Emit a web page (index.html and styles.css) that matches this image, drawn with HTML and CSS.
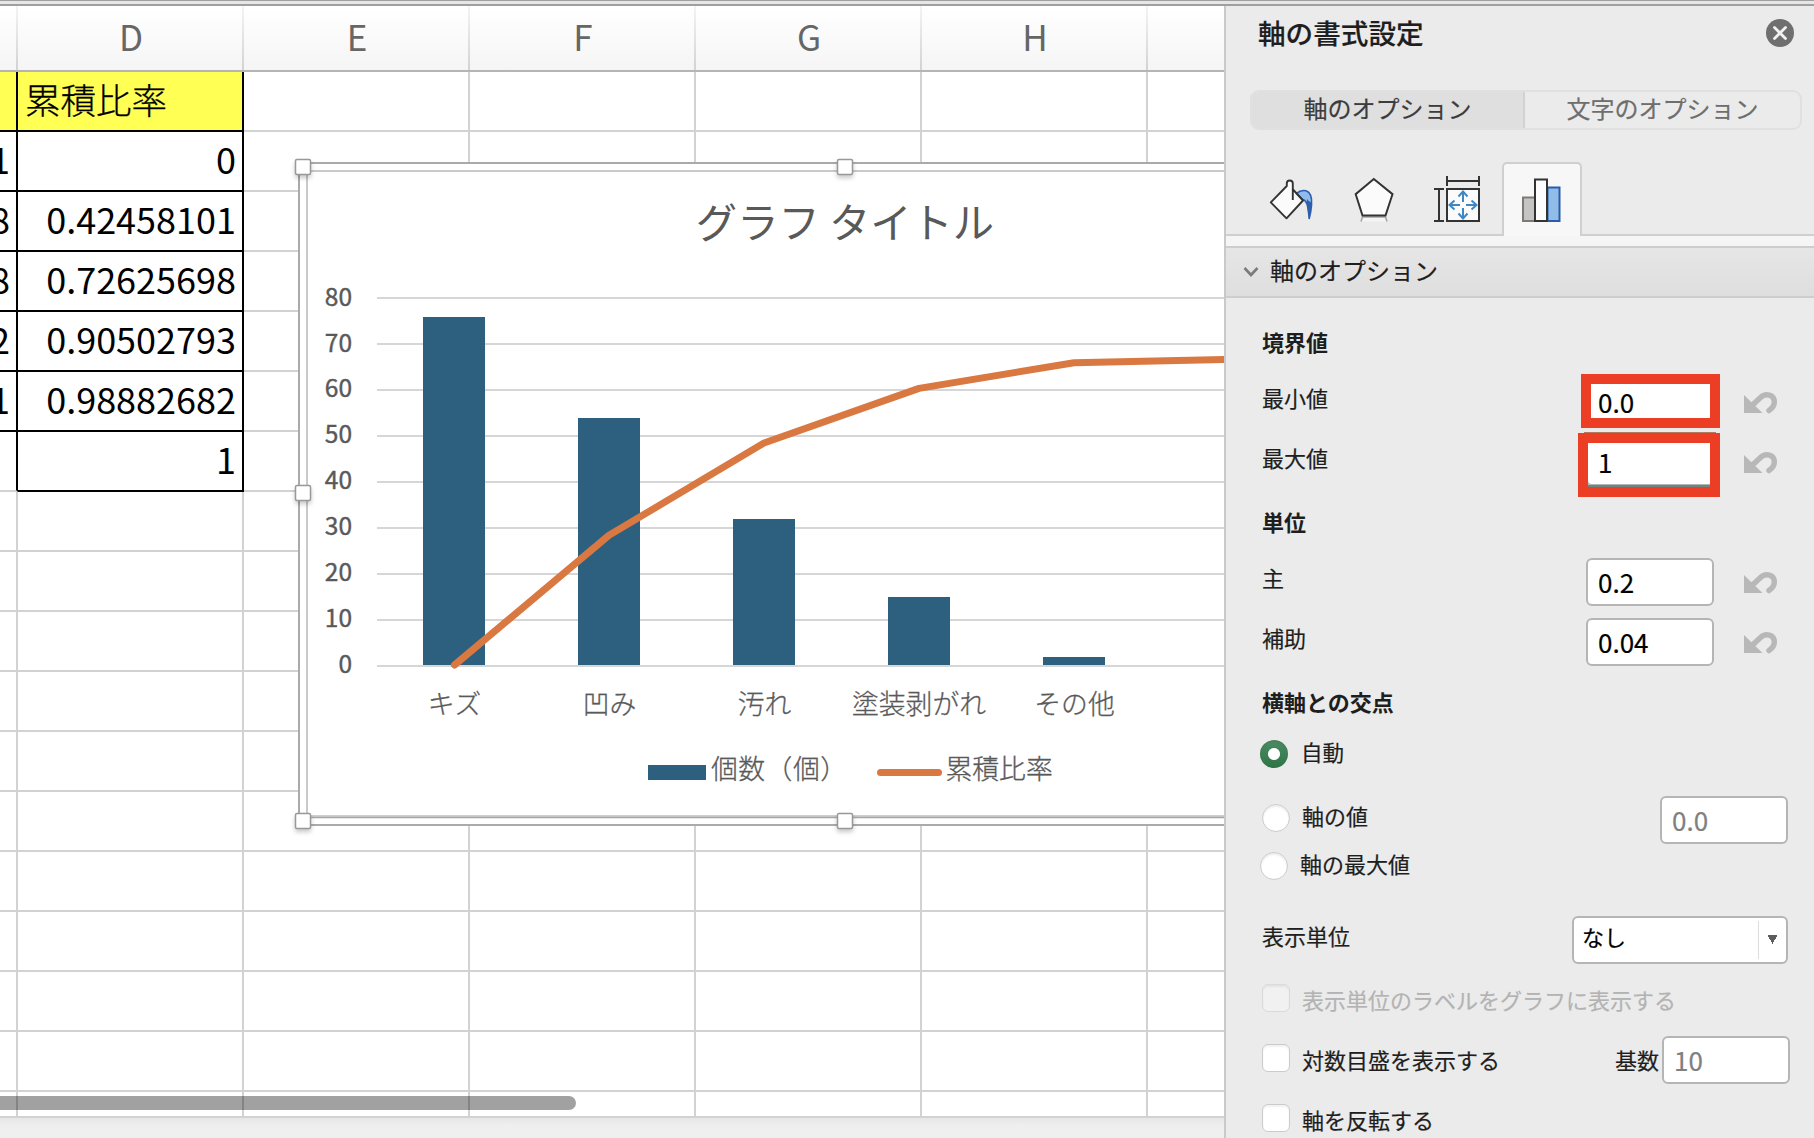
FILE: index.html
```html
<!DOCTYPE html>
<html lang="ja">
<head>
<meta charset="utf-8">
<title>軸の書式設定</title>
<link rel="stylesheet" href="styles.css">
</head>
<body>
<div class="topbar"></div>
<div class="workspace">
  <main class="sheet">
    <div class="cols">
      <div class="col-head"></div><div class="col-head">D</div><div class="col-head">E</div><div class="col-head">F</div><div class="col-head">G</div><div class="col-head">H</div><div class="col-head last"></div>
    </div>
    <div class="row"><div class="cell tbl yellow"></div><div class="cell tbl yellow text">累積比率</div><div class="cell"></div><div class="cell"></div><div class="cell"></div><div class="cell"></div><div class="cell last"></div></div>
    <div class="row"><div class="cell tbl">1</div><div class="cell tbl">0</div><div class="cell"></div><div class="cell"></div><div class="cell"></div><div class="cell"></div><div class="cell last"></div></div>
    <div class="row"><div class="cell tbl">8</div><div class="cell tbl">0.42458101</div><div class="cell"></div><div class="cell"></div><div class="cell"></div><div class="cell"></div><div class="cell last"></div></div>
    <div class="row"><div class="cell tbl">8</div><div class="cell tbl">0.72625698</div><div class="cell"></div><div class="cell"></div><div class="cell"></div><div class="cell"></div><div class="cell last"></div></div>
    <div class="row"><div class="cell tbl">2</div><div class="cell tbl">0.90502793</div><div class="cell"></div><div class="cell"></div><div class="cell"></div><div class="cell"></div><div class="cell last"></div></div>
    <div class="row"><div class="cell tbl">1</div><div class="cell tbl">0.98882682</div><div class="cell"></div><div class="cell"></div><div class="cell"></div><div class="cell"></div><div class="cell last"></div></div>
    <div class="row"><div class="cell edge"></div><div class="cell tbl">1</div><div class="cell"></div><div class="cell"></div><div class="cell"></div><div class="cell"></div><div class="cell last"></div></div>
    <div class="row"><div class="cell"></div><div class="cell"></div><div class="cell"></div><div class="cell"></div><div class="cell"></div><div class="cell"></div><div class="cell last"></div></div>
    <div class="row"><div class="cell"></div><div class="cell"></div><div class="cell"></div><div class="cell"></div><div class="cell"></div><div class="cell"></div><div class="cell last"></div></div>
    <div class="row"><div class="cell"></div><div class="cell"></div><div class="cell"></div><div class="cell"></div><div class="cell"></div><div class="cell"></div><div class="cell last"></div></div>
    <div class="row"><div class="cell"></div><div class="cell"></div><div class="cell"></div><div class="cell"></div><div class="cell"></div><div class="cell"></div><div class="cell last"></div></div>
    <div class="row"><div class="cell"></div><div class="cell"></div><div class="cell"></div><div class="cell"></div><div class="cell"></div><div class="cell"></div><div class="cell last"></div></div>
    <div class="row"><div class="cell"></div><div class="cell"></div><div class="cell"></div><div class="cell"></div><div class="cell"></div><div class="cell"></div><div class="cell last"></div></div>
    <div class="row"><div class="cell"></div><div class="cell"></div><div class="cell"></div><div class="cell"></div><div class="cell"></div><div class="cell"></div><div class="cell last"></div></div>
    <div class="row"><div class="cell"></div><div class="cell"></div><div class="cell"></div><div class="cell"></div><div class="cell"></div><div class="cell"></div><div class="cell last"></div></div>
    <div class="row"><div class="cell"></div><div class="cell"></div><div class="cell"></div><div class="cell"></div><div class="cell"></div><div class="cell"></div><div class="cell last"></div></div>
    <div class="row"><div class="cell"></div><div class="cell"></div><div class="cell"></div><div class="cell"></div><div class="cell"></div><div class="cell"></div><div class="cell last"></div></div>
    <div class="row partial"><div class="cell"></div><div class="cell"></div><div class="cell"></div><div class="cell"></div><div class="cell"></div><div class="cell"></div><div class="cell last"></div></div>
    <div class="scrollbar"></div>

    <svg class="chart" width="944" height="690" viewBox="280 150 944 690">
      <rect x="299" y="163" width="1100" height="662" fill="#fff" stroke="#aaa" stroke-width="2"/>
      <path d="M307 817V171H1224" fill="none" stroke="#c9c9c9" stroke-width="2"/>
      <path d="M307 816H1224" stroke="#cfcfcf" stroke-width="2"/>
      <path d="M307 817.5H1224" stroke="#a6a6a6" stroke-width="1.4"/>
      <text class="chart-title" x="845" y="238">グラフ タイトル</text>
      <path d="M377 298H1224M377 344H1224M377 390H1224M377 436H1224M377 482H1224M377 528H1224M377 574H1224M377 620H1224M377 666H1224" stroke="#d6d6d6" stroke-width="2"/>
      <g class="axis">
        <text x="352" y="306">80</text><text x="352" y="352">70</text><text x="352" y="397">60</text><text x="352" y="443">50</text><text x="352" y="489">40</text><text x="352" y="535">30</text><text x="352" y="581">20</text><text x="352" y="627">10</text><text x="352" y="673">0</text>
      </g>
      <g fill="#2d5f7f">
        <rect x="423" y="317" width="62" height="348"/><rect x="578" y="418" width="62" height="247"/><rect x="733" y="519" width="62" height="146"/><rect x="888" y="597" width="62" height="68"/><rect x="1043" y="657" width="62" height="8"/>
        <rect x="648" y="765" width="58" height="15"/>
      </g>
      <path d="M454.500 665L609 535.3L764 443L919 388.4L1074 362.7L1229 359.3" fill="none" stroke="#d97941" stroke-width="7" stroke-linecap="round" stroke-linejoin="round"/>
      <path d="M880.5 772.5H938.5" stroke="#d97941" stroke-width="7" stroke-linecap="round"/>
      <g class="category">
        <text x="454.500" y="714">キズ</text><text x="609.500" y="714">凹み</text><text x="764.500" y="714">汚れ</text><text x="919" y="714">塗装剥がれ</text><text x="1074.500" y="714">その他</text>
      </g>
      <g class="legend"><text class="wide" x="711" y="779">個数（個）</text><text x="945.500" y="779">累積比率</text></g>
      <g class="handles">
        <rect x="295.500" y="159.500" width="15" height="15" rx="1.500"/><rect x="837.500" y="159.500" width="15" height="15" rx="1.500"/><rect x="295.500" y="485.500" width="15" height="15" rx="1.500"/><rect x="295.500" y="813.500" width="15" height="15" rx="1.500"/><rect x="837.500" y="813.500" width="15" height="15" rx="1.500"/>
      </g>
    </svg>
  </main>

  <aside class="panel">
    <header class="panel-head">
      <h1>軸の書式設定</h1>
      <svg width="28" height="28" viewBox="0 0 28 28"><circle cx="14" cy="14" r="14" fill="#6f6f6f"/><path d="M8.500 8.500L19.500 19.500M19.500 8.500L8.500 19.500" stroke="#f2f2f2" stroke-width="2.800" stroke-linecap="round"/></svg>
    </header>
    <div class="segments"><div class="seg on">軸のオプション</div><div class="seg">文字のオプション</div></div>
    <nav class="tabs">
      <div class="tab"><svg width="84" height="72" viewBox="0 0 84 72">
        <path d="M36.300 56.300L20.600 40.300L36.300 24.500V21.500Q36.300 18.500 39.500 18.500Q42.500 18.500 42.500 21.500V27L52.500 38.300Z" fill="#fbfbfb"/>
        <path d="M46.500 31.500Q51 27.500 56 28.800Q62.500 31 61.500 43Q61 50 59.200 56.500Q58.300 46 57 42Q55.500 38 52.500 37.500Z" fill="#8fbcec" stroke="#2c5fae" stroke-width="1.700" stroke-linejoin="round"/>
        <path d="M59.200 56.500Q56.500 42 57 37Q60 41 61.500 40Q61 50 59.200 56.500" fill="#2c5fae"/>
        <path d="M42.800 38V21.500Q42.800 18.500 39.700 18.500Q36.800 18.500 36.800 21.500V24L20.800 40.300L36.500 56.300L53 38.500L43 27.500" fill="none" stroke="#333" stroke-width="1.900" stroke-linejoin="round"/></svg></div>
      <div class="tab"><svg width="84" height="72" viewBox="0 0 84 72">
        <path d="M27 59.500L28.500 55H51.500L53 59.500" fill="#f4f4f4" stroke="#a3a3a3" stroke-width="1.600"/>
        <path d="M39.800 17L58.500 32.200L51.500 53.500H28.500L21.700 32.200Z" fill="#fbfbfb" stroke="#333" stroke-width="2"/></svg></div>
      <div class="tab"><svg width="84" height="72" viewBox="0 0 84 72">
        <rect x="29" y="27" width="32" height="32" fill="#fbfbfb"/>
        <path d="M29 27H61V59H29ZM29 14V24M61 14V24M29 19H61M16 27H26M16 59H26M21 27V59" fill="none" stroke="#333" stroke-width="2"/>
        <path d="M45 40V30M40.500 34.500L45 29.500L49.500 34.500M45 46V56M40.500 51.500L45 56.500L49.500 51.500M42 43H32M36.500 38.500L31.500 43L36.500 47.500M48 43H58M53.500 38.500L58.500 43L53.500 47.500" fill="none" stroke="#3d87c5" stroke-width="2"/></svg></div>
      <div class="tab on"><svg width="76" height="70" viewBox="0 0 76 70">
        <rect x="19" y="33.500" width="12" height="23.500" fill="#c6c4c2" stroke="#7c7a78" stroke-width="2"/>
        <rect x="43.500" y="23.500" width="12" height="33.500" fill="#90bce8" stroke="#2a5cab" stroke-width="2"/>
        <rect x="31" y="15.500" width="12" height="41.500" fill="#fdfdfd" stroke="#333" stroke-width="2"/></svg></div>
    </nav>
    <div class="section"><svg width="16" height="12" viewBox="0 0 16 12"><path d="M1.500 2L8 9L14.500 2" fill="none" stroke="#7b7b7b" stroke-width="2.600"/></svg><span>軸のオプション</span></div>

    <div class="body">
      <div class="line head">境界値</div>
      <div class="line"><label>最小値</label><div class="field">0.0</div><svg class="undo" width="36" height="24" viewBox="0 0 36 24"><use href="#undo"/></svg><i class="mark first"></i></div>
      <div class="line"><label>最大値</label><div class="field">1</div><svg class="undo" width="36" height="24" viewBox="0 0 36 24"><use href="#undo"/></svg><i class="mark second"></i></div>
      <div class="line head">単位</div>
      <div class="line"><label>主</label><div class="field">0.2</div><svg class="undo" width="36" height="24" viewBox="0 0 36 24"><use href="#undo"/></svg></div>
      <div class="line"><label>補助</label><div class="field">0.04</div><svg class="undo" width="36" height="24" viewBox="0 0 36 24"><g id="undo"><path d="M1 5V23H19.500Z" fill="#b8b8b8"/><path d="M9 15.500L17.500 7.500C22.500 2.500 31.300 4.500 31.300 12Q31.300 17 26 20.500" fill="none" stroke="#b8b8b8" stroke-width="5.500" stroke-linecap="round"/></g></svg></div>
      <div class="line head">横軸との交点</div>
      <div class="line auto"><i class="radio on"></i><label>自動</label></div>
      <div class="line value"><i class="radio"></i><label>軸の値</label><div class="field off">0.0</div></div>
      <div class="line max"><i class="radio"></i><label>軸の最大値</label></div>
      <div class="line unit"><label>表示単位</label><div class="select"><span>なし</span><b></b></div></div>
      <div class="line check off"><i class="box"></i><label>表示単位のラベルをグラフに表示する</label></div>
      <div class="line check"><i class="box"></i><label>対数目盛を表示する</label><label class="base">基数</label><div class="field off">10</div></div>
      <div class="line check"><i class="box"></i><label>軸を反転する</label></div>
    </div>
  </aside>
</div>
</body>
</html>
```
FILE: styles.css
```css
* { box-sizing: border-box; }
body {
  margin: 0; width: 1814px; height: 1138px; overflow: hidden;
  font-family: "Noto Sans CJK JP", sans-serif; background: #efefef; color: #1e1e1e;
}
i { font-style: normal; }
.topbar { height: 6px; background: linear-gradient(#a0a0a0 0 1px, #e6e6e6 1px 4px, #a09f9f 4px 6px); }
.workspace { display: flex; height: 1132px; }

/* spreadsheet */
.sheet { position: relative; width: 1224px; overflow: hidden; background: linear-gradient(#e6e6e6, #efefef 8px) 0 1112px no-repeat, #efefef; font-size: 36px; }
.cols, .row { display: grid; grid-template-columns: 18px repeat(5, 226px) 76px; }
.cols { height: 66px; background: linear-gradient(#fff, #f5f5f5); border-bottom: 2px solid #b5b5b5; }
.col-head { display: flex; justify-content: center; align-items: center; padding: 0 0 5px 2px; font-size: 35px; line-height: 1; color: #666; border-right: 2px solid; border-image: linear-gradient(#f4f4f4, #d2d2d2) 1; }
.row { height: 60px; background: #fff; }
.cell {
  display: flex; align-items: center; justify-content: flex-end; min-width: 0; overflow: hidden;
  padding: 0 6px 6px 0; border-right: 2px solid #d2d2d2; border-bottom: 2px solid #d2d2d2; line-height: 1; white-space: nowrap; color: #000;
}
.cell.last, .col-head.last { border-right: 0; }
.cell.tbl { border-color: #000; }
.cell.edge { border-right-color: #000; }
.cell.yellow { background: #ffff54; }
.cell.text { justify-content: flex-start; padding: 0 0 4px 7px; font-size: 35.500px; font-weight: 300; -webkit-text-stroke: .3px #000; }
.row.partial { height: 26px; }
.row.partial .cell { padding: 0; }
.scrollbar { position: absolute; left: -10px; top: 1090px; width: 586px; height: 14px; border-radius: 7px; background: rgba(0, 0, 0, .37); }

/* chart */
.chart { position: absolute; left: 280px; top: 144px; }
.chart-title { font-size: 41.300px; text-anchor: middle; fill: #595959; }
.axis { font-size: 24.500px; text-anchor: end; fill: #595959; stroke: #595959; stroke-width: .4px; }
.category, .legend { font-size: 26.800px; font-weight: 300; fill: #595959; stroke: #595959; stroke-width: .3px; }
.category { text-anchor: middle; }
.legend .wide { letter-spacing: .5px; }
.handles { fill: #fff; stroke: #999; stroke-width: 1.500px; filter: drop-shadow(0 3px 2px rgba(0, 0, 0, .2)); }

/* format panel */
.panel { width: 590px; border-left: 2px solid #c9c9c9; background: #ebebeb; -webkit-text-stroke: .2px; }
.panel-head { display: flex; align-items: center; justify-content: space-between; height: 54px; padding: 0 20px 0 32px; }
h1 { margin: 0; padding-bottom: 1px; font-size: 27.600px; font-weight: 500; line-height: 1; }
.segments { display: flex; width: 552px; height: 40px; margin: 30px 0 0 24px; border: 2px solid #e0e0e0; border-radius: 9px; overflow: hidden; }
.seg { flex: 1; display: flex; align-items: center; justify-content: center; padding-bottom: 4px; font-size: 24px; line-height: 1; color: #6e6e6e; }
.seg.on { color: #3c3c3c; background: #dfdfdf; border-right: 2px solid #d2d2d2; flex: 0 0 273px; }
.tabs { display: flex; height: 74px; margin-top: 32px; padding-left: 24px; background: linear-gradient(#cfcfcf, #cfcfcf) 0 72px / 100% 2px no-repeat; }
.tab { width: 84px; height: 72px; }
.tab.on { width: 80px; height: 74px; border: 2px solid #cfcfcf; border-bottom: 0; border-radius: 5px 5px 0 0; background: #f7f7f7; }
.tab svg { display: block; }
.section { display: flex; align-items: center; gap: 11px; height: 62px; padding: 0 0 0 17px; font-size: 24px; line-height: 1; border-top: 10px solid #f5f5f5; background: linear-gradient(#cdcdcd, #cdcdcd) 0 0 / 100% 2px no-repeat, linear-gradient(#cdcdcd, #cdcdcd) 0 50px / 100% 2px no-repeat, linear-gradient(#e6e6e6, #dedede); }
.section span { padding-bottom: 4px; }
.body { padding-top: 15px; font-size: 22px; line-height: 1; }
.line { position: relative; display: flex; align-items: center; height: 60px; padding: 0 0 2px 36px; white-space: nowrap; }
.line label { padding-bottom: 10px; }
.line.head { padding-bottom: 4px; font-weight: 700; -webkit-text-stroke: 0; }
.field {
  width: 128px; height: 48px; margin: 0 100px 0 auto; padding: 9px 0 0 10px; flex: none;
  font-size: 26px; line-height: 26px; color: #000; background: #fff; border: 2px solid #b5b5b5; border-radius: 6px;
}
.line .undo { position: absolute; left: 517px; top: 17px; }
.field.off { color: #808080; margin-right: 26px; }
.mark { position: absolute; border: 10px solid #eb3e25; }
.mark.first { left: 355px; top: 1px; width: 139px; height: 54px; }
.mark.second { left: 352px; top: 0; width: 142px; height: 64px; }
.mark.second::before, .mark.second::after { content: ""; position: absolute; height: 2px; background: #6f8583; }
.mark.second::before { left: 0; right: 0; bottom: 0; }
.mark.second::after { left: -4px; right: -6px; top: -11px; height: 1px; background: #b5785c; }
.radio, .box { flex: none; width: 28px; height: 28px; background: #fff; border: 1px solid #cbcbcb; }
.radio { border-radius: 50%; box-shadow: inset 0 2px 2px rgba(0, 0, 0, .07); }
.box { border-radius: 6px; box-shadow: inset 0 2px 2px rgba(0, 0, 0, .06); }
.radio.on { border: 0; background: radial-gradient(circle, #fff 5.500px, transparent 6.500px), linear-gradient(#4b8c64, #2e7446); }
.auto, .value, .max { padding-bottom: 0; }
.auto label, .value label, .max label { padding-bottom: 6px; margin-left: 12px; }
.auto { height: 42px; padding-left: 34px; }
.auto label { padding-bottom: 4px; margin-left: 13px; font-size: 21.500px; }
.value { height: 56px; margin-top: 15px; }
.value .field { position: relative; top: 2px; }
.max { height: 40px; padding-left: 34px; }
.unit { margin-top: 24px; padding-bottom: 0; }
.select { display: flex; align-items: center; justify-content: space-between; width: 216px; height: 48px; margin: 0 26px 0 auto; padding: 0 8px 0 8px; color: #000; background: #fff; border: 2px solid #b5b5b5; border-radius: 6px; }
.select span { padding-bottom: 9px; }
.select b { width: 20px; height: 38px; border-left: 1px solid #ddd; background: conic-gradient(from -29deg at 50% 100%, #5c5c5c 58deg, transparent 0) 8px 14px / 11px 9px no-repeat; }
.check { padding-bottom: 4px; }
.check label { padding: 2px 0 0; margin-left: 12px; }
.check.off { color: #b3b3b3; }
.check.off .box { background: #f1f1f1; border-color: #dadada; }
.check .base { margin-left: auto; }
.check .field { margin: 4px 24px 0 3px; }
```
